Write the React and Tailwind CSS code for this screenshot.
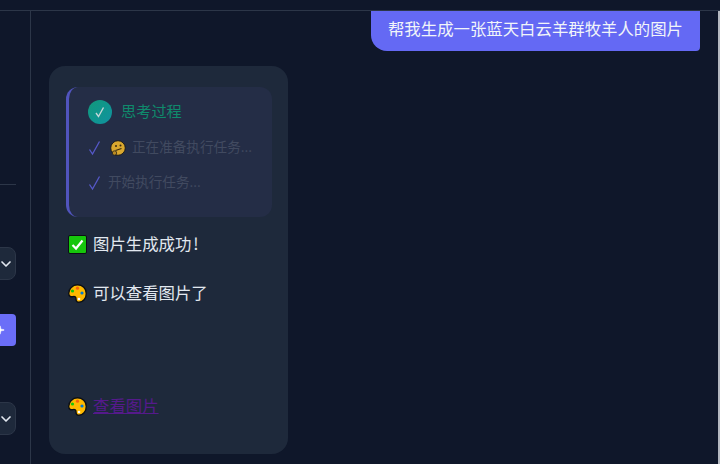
import React from "react";
import { ChevronDown, Sparkle } from "lucide-react";

const FONT = "font-['Noto_Sans_CJK_SC','Liberation_Sans',sans-serif]";

function Tick() {
  return (
    <svg width="14" height="16" viewBox="0 0 14 16" fill="none" className="shrink-0">
      <path d="M1.5 9.5 L4.5 14 L11.5 1.5" stroke="#5558c8" strokeWidth="1.3" />
    </svg>
  );
}

function ThinkEmoji() {
  return (
    <svg width="16" height="16" viewBox="0 0 16 16" className="shrink-0">
      <circle cx="8" cy="8" r="7.3" fill="#d9a72e" stroke="#1a1a1a" strokeWidth="1" />
      <circle cx="6" cy="6" r="1" fill="#3a2a10" />
      <circle cx="10.5" cy="5.5" r="1" fill="#3a2a10" />
      <path d="M5.5 10.5 L11.5 8.5" stroke="#3a2a10" strokeWidth="1.2" />
      <circle cx="4.5" cy="13" r="2.2" fill="#b98a22" stroke="#1a1a1a" strokeWidth="0.7" />
    </svg>
  );
}

function CheckEmoji() {
  return (
    <svg width="19" height="19" viewBox="0 0 19 19" className="shrink-0">
      <rect x="0.5" y="0.5" width="18" height="18" rx="1.5" fill="#16c60c" stroke="#0b0f14" />
      <path d="M4.5 10 L8 13.5 L14.5 5.5" fill="none" stroke="#fff" strokeWidth="2.2" />
    </svg>
  );
}

function PaletteEmoji({ className = "shrink-0" }) {
  return (
    <svg width="19" height="19" viewBox="0 0 19 19" className={className}>
      <path
        d="M9.5 0.8 C14.5 0.8 18.3 4.5 18.3 9.5 C18.3 14.5 14.8 18.3 11 18.3 C8.8 18.3 8 17 8 15 C8 13 6.8 12 5 12.6 C2.8 13.3 0.8 12.2 0.7 9.5 C0.6 4.8 4.5 0.8 9.5 0.8 Z"
        fill="#ffb900"
        stroke="#0b0f14"
        strokeWidth="1.4"
      />
      <circle cx="4.5" cy="7" r="1.6" fill="#16c60c" />
      <circle cx="9.5" cy="4.2" r="1.6" fill="#f7630c" />
      <circle cx="14" cy="9" r="1.6" fill="#0078d4" />
      <circle cx="11" cy="15" r="1.3" fill="#fff" />
    </svg>
  );
}

function SideSelect() {
  return (
    <div className="-ml-8 flex h-[33px] w-12 items-center justify-end rounded-lg border border-[#2c3648] bg-[#1e293b] pr-[1px]">
      <ChevronDown size={16} strokeWidth={2.5} className="text-[#e2e8f0]" />
    </div>
  );
}

export default function App() {
  return (
    <div className={`${FONT} flex h-[464px] w-[720px] flex-col overflow-hidden bg-[#0f172a]`}>
      {/* top bar */}
      <div className="h-[11px] shrink-0 border-b border-[#2c3648]" />

      <div className="flex min-h-0 flex-1">
        {/* sidebar, mostly cut off */}
        <aside className="flex w-[31px] shrink-0 flex-col overflow-hidden border-r border-[#2c3648] pt-[173px]">
          <div className="h-px w-4 bg-[#2c3648]" />
          <div className="mt-[62px]"><SideSelect /></div>
          <div className="-ml-8 mt-[34px] flex h-8 w-12 items-center justify-end rounded-[4px] bg-[#6b6ef8] pr-[11px] text-white">
            <Sparkle size={10} fill="white" strokeWidth={1} />
          </div>
          <div className="mt-[56px]"><SideSelect /></div>
        </aside>

        {/* chat */}
        <main className="min-w-0 flex-1 pl-[18px] pr-[18px]">
          <div className="flex justify-end">
            <div className="flex h-10 w-[329px] items-center justify-center rounded-bl-[16px] rounded-br-[4px] bg-[#6469f4] pb-[5px] text-[16.4px] text-[#f1f5f9]">
              帮我生成一张蓝天白云羊群牧羊人的图片
            </div>
          </div>

          <div className="mt-[15px] h-[388px] w-[239px] rounded-[16px] bg-[#1e293b] pl-[17px] pr-4 pt-[21px]">
            {/* thinking panel */}
            <div className="h-[130px] rounded-xl border-l-[3px] border-[#5154bd] bg-[#242d46] pl-[19px] pt-[13px]">
              <div className="flex items-center gap-[9px]">
                <div className="flex h-6 w-6 items-center justify-center rounded-full bg-gradient-to-br from-[#12997a] to-[#1192a0]">
                  <svg width="12" height="12" viewBox="0 0 12 12" fill="none">
                    <path d="M2 7 L4.5 10.5 L9.5 1.5" stroke="#c4d6d8" strokeWidth="1.4" />
                  </svg>
                </div>
                <span className="pb-[3px] text-[15.2px] leading-[21px] text-[#0f8a6c]">思考过程</span>
              </div>
              <div className="mt-3 flex h-6 items-center gap-[8px] text-[13.6px] leading-5 text-[#414a60]">
                <Tick />
                <ThinkEmoji />
                <span className="-ml-[2px] whitespace-nowrap pb-1">正在准备执行任务...</span>
              </div>
              <div className="mt-[11px] flex h-6 items-center gap-[6px] text-[13.6px] leading-5 text-[#414a60]">
                <Tick />
                <span className="whitespace-nowrap pb-1">开始执行任务...</span>
              </div>
            </div>

            {/* answer */}
            <div className="mt-[15px] flex h-6 items-center gap-[6px] pl-[2px] text-[16.4px] text-[#e2e8f0]">
              <CheckEmoji />
              <span className="pb-[2px]">图片生成成功<span className="ml-[2px]">!</span></span>
            </div>
            <div className="mt-[25px] flex h-6 items-center gap-[6px] pl-[2px] text-[16.4px] text-[#e2e8f0]">
              <PaletteEmoji />
              <span className="pb-[2px]">可以查看图片了</span>
            </div>
            <div className="mt-[88px] h-6 pl-[2px] text-[16.4px] leading-6">
              <a href="#" className="text-[#551a8b] underline">
                <PaletteEmoji className="mr-[6px] inline-block align-[-4px]" />
                查看图片
              </a>
            </div>
          </div>
        </main>

        {/* scrollbar edge */}
        <div className="w-[2px] shrink-0 bg-[#b4b8c0]" />
      </div>
    </div>
  );
}
